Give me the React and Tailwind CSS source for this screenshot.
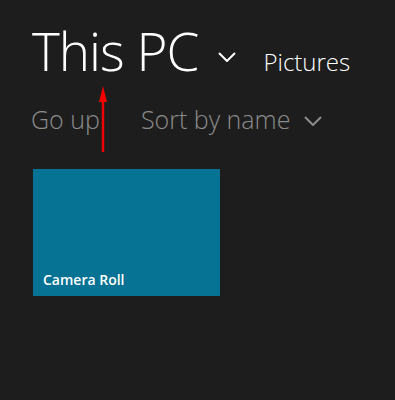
const Chevron = ({ className }) => (
  <svg viewBox="0 0 18 10" className={className} fill="none" stroke="currentColor" strokeWidth="2">
    <path d="M1 1l8 8 8-8" />
  </svg>
);

const App = () => {
  return (
    <div
      className="relative w-[395px] h-[400px] bg-[#1d1d1d] overflow-hidden"
      style={{ fontFamily: '"Open Sans", "Noto Sans", sans-serif' }}
    >
      {/* header */}
      <div className="flex flex-row items-end pl-[32px] pt-[16px] h-[86px]">
        <h1 className="text-[53px] leading-[64px] font-light text-white tracking-[-1px] mb-[3px]">
          This PC
        </h1>
        <Chevron className="w-[18px] h-[10px] text-white ml-[20px] mb-[24px]" />
        <p className="text-[24px] leading-[36px] font-light text-white ml-[27px] mb-[6px]">
          Pictures
        </p>
      </div>

      {/* toolbar */}
      <div className="flex flex-row items-center pl-[31px] mt-[16px] text-[#8c8c8c]">
        <span className="text-[25px] leading-[34px] font-light">Go up</span>
        <span className="text-[25px] leading-[34px] font-light ml-[41px]">Sort by name</span>
        <Chevron className="w-[18px] h-[10px] ml-[14px] mt-[4px]" />
      </div>

      {/* folders */}
      <div className="flex flex-row pl-[33px] mt-[33px]">
        <div className="w-[187px] h-[127px] bg-[#067394] flex flex-col justify-end px-[10px] pb-[6px]">
          <span className="text-white text-[14px] font-semibold">Camera Roll</span>
        </div>
      </div>

      {/* annotation arrow */}
      <svg className="absolute left-[98px] top-[85px] w-[10px] h-[68px]" viewBox="0 0 10 68">
        <path d="M5 1L9 17H1z" fill="#f40000" />
        <rect x="3.8" y="14" width="2.4" height="53" fill="#f40000" />
      </svg>
    </div>
  );
};

export default App;
